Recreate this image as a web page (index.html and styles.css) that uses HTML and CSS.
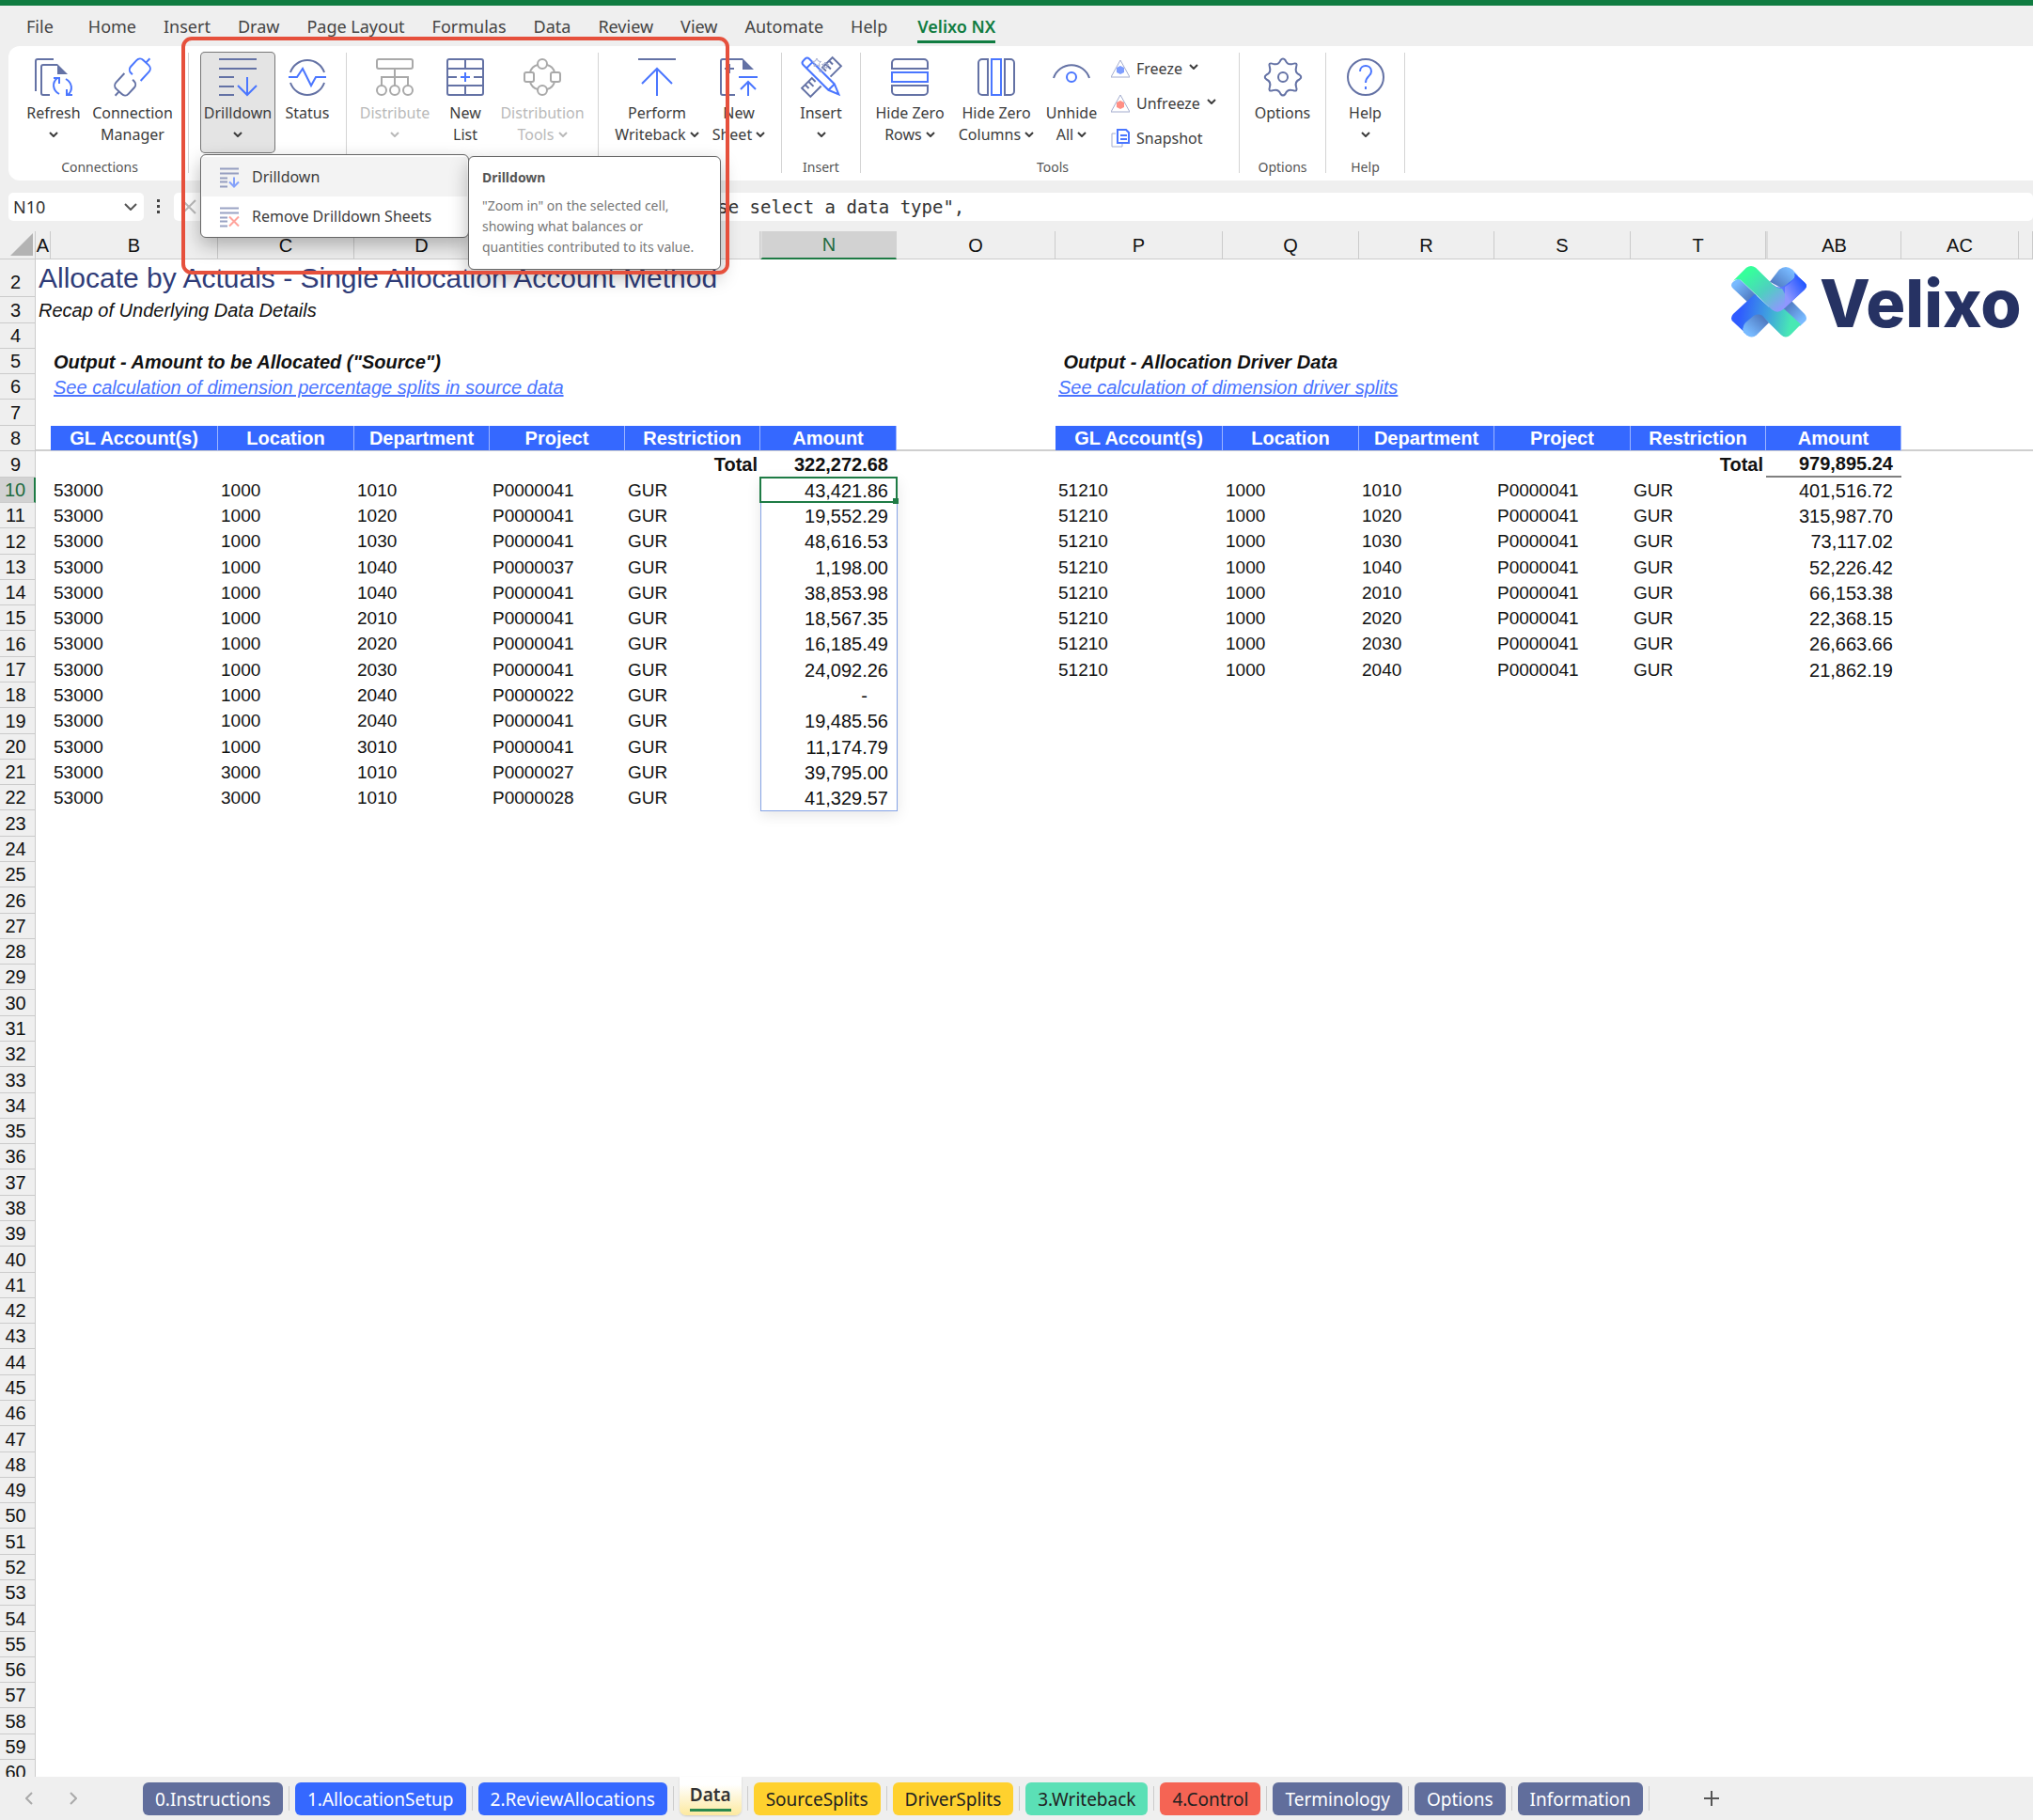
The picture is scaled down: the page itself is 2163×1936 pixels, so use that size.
FILE: index.html
```html
<!DOCTYPE html>
<html lang="en">
<head>
<meta charset="utf-8">
<title>Allocate by Actuals - Data</title>
<link rel="stylesheet" href="styles.css">
</head>
<body>
<svg class="defs" aria-hidden="true">
  <symbol id="chev" viewBox="0 0 10 6"><path d="M1 1l4 4 4-4" fill="none" stroke="currentColor" stroke-width="2"/></symbol>
</svg>

<nav class="tabs">
  <a href="#" class="file">File</a><a href="#">Home</a><a href="#">Insert</a><a href="#">Draw</a><a href="#">Page Layout</a><a href="#">Formulas</a><a href="#">Data</a><a href="#">Review</a><a href="#">View</a><a href="#">Automate</a><a href="#">Help</a><a href="#" class="current">Velixo NX</a>
</nav>

<section class="ribbon">
  <div class="group g-conn">
    <div class="row">
      <button class="cmd w70"><svg class="ico" viewBox="0 0 40 40"><path class="n" d="M1 35V3a2 2 0 0 1 2-2h17M16 39H9a2 2 0 0 1-2-2V9a2 2 0 0 1 2-2h15"/><path class="nf" d="M24 6l11 11H24z"/><path class="b" d="M26 38c-7-4-8-12-2-17M20 21h6v6M33 22c7 4 8 12 2 17M40 39h-6v-6"/></svg><span>Refresh</span><span><svg class="ch"><use href="#chev"/></svg></span></button>
      <button class="cmd w98"><svg class="ico" viewBox="0 0 40 40"><g transform="rotate(-47 20 20)"><path class="n" d="M-7 20H-1M17 11H4a5 5 0 0 0-5 5v8a5 5 0 0 0 5 5h9a5 5 0 0 0 5-5v-2"/><path class="b" d="M23 29h13a5 5 0 0 0 5-5v-8a5 5 0 0 0-5-5h-9a5 5 0 0 0-5 5v2M41 20h6"/></g></svg><span>Connection</span><span>Manager</span></button>
    </div>
    <div class="caption">Connections</div>
  </div>
  <i class="sep"></i>
  <div class="group g-drill">
    <div class="row">
      <div class="drop">
        <button class="cmd w80 open"><svg class="ico" viewBox="0 0 40 40"><path class="n" d="M0 1h40M0 11h40M0 20h16M0 30h16M0 39h16"/><path class="b" d="M30 20v19M20 29l10 10 10-10"/></svg><span>Drilldown</span><span><svg class="ch"><use href="#chev"/></svg></span></button>
        <div class="menu">
          <button class="item hover"><svg viewBox="0 0 20 20"><path class="n" d="M0 1h20M0 6h20M0 11h8M0 15h8M0 20h8"/><path class="b" d="M15 10v10M10 15l5 5 5-5"/></svg>Drilldown</button>
          <button class="item"><svg viewBox="0 0 20 20"><path class="n" d="M0 1h20M0 6h20M0 11h8M0 15h8M0 20h8"/><path class="r" d="M10 10l10 10M20 10L10 20"/></svg>Remove Drilldown Sheets</button>
        </div>
        <div class="tip" role="tooltip"><b>Drilldown</b><p>"Zoom in" on the selected cell,<br>showing what balances or<br>quantities contributed to its value.</p></div>
        <div class="frame"></div>
      </div>
      <button class="cmd w68"><svg class="ico" viewBox="0 0 40 40"><path class="n" d="M2 15a19 19 0 0 1 36 0M2 26a19 19 0 0 0 36 0"/><path class="b" d="M0 20h9l6-9 9 18 5-9h11"/></svg><span>Status</span></button>
    </div>
  </div>
  <i class="sep"></i>
  <div class="group g-dist">
    <div class="row">
      <button class="cmd w86" disabled><svg class="ico" viewBox="0 0 40 40"><path class="g" d="M3 1h34a2 2 0 0 1 2 2v6a2 2 0 0 1-2 2H3a2 2 0 0 1-2-2V3a2 2 0 0 1 2-2zM20 11v18M6 29v-9h28v9"/><circle class="g" cx="6" cy="34" r="5"/><circle class="g" cx="20" cy="34" r="5"/><circle class="g" cx="34" cy="34" r="5"/></svg><span>Distribute</span><span><svg class="ch"><use href="#chev"/></svg></span></button>
      <button class="cmd w64"><svg class="ico" viewBox="0 0 40 40"><path class="n" d="M3 1h34a2 2 0 0 1 2 2v34a2 2 0 0 1-2 2H3a2 2 0 0 1-2-2V3a2 2 0 0 1 2-2zM1 11h38M1 29h38M20 1v10M20 29v10M1 20h10M29 20h10"/><path class="b" d="M20 15v10M15 20h10"/></svg><span>New</span><span>List</span></button>
      <button class="cmd w100" disabled><svg class="ico" viewBox="0 0 40 40"><circle class="g" cx="20" cy="6" r="5"/><circle class="g" cx="20" cy="34" r="5"/><rect class="g" x="1" y="15" width="10" height="10" rx="2"/><rect class="g" x="29" y="15" width="10" height="10" rx="2"/><path class="g" d="M15 7c-4 1-7 4-8 8M25 7c4 1 7 4 8 8M15 33c-4-1-7-4-8-8M25 33c4-1 7-4 8-8"/></svg><span>Distribution</span><span>Tools <svg class="ch"><use href="#chev"/></svg></span></button>
    </div>
  </div>
  <i class="sep"></i>
  <div class="group g-write">
    <div class="row">
      <button class="cmd w104"><svg class="ico" viewBox="0 0 40 40"><path class="n" d="M0 1h40"/><path class="b" d="M20 40V11M4 27l16-16 16 16"/></svg><span>Perform</span><span>Writeback <svg class="ch"><use href="#chev"/></svg></span></button>
      <button class="cmd w70"><svg class="ico" viewBox="0 0 40 40"><path class="n" d="M16 39H3a2 2 0 0 1-2-2V3a2 2 0 0 1 2-2h21M10 6v10M5 11h10"/><path class="nf" d="M24 0l12 12H24z"/><path class="b" d="M20 20h20M30 40V26M22 33l8-8 8 8"/></svg><span>New</span><span>Sheet <svg class="ch"><use href="#chev"/></svg></span></button>
    </div>
  </div>
  <i class="sep"></i>
  <div class="group">
    <div class="row">
      <button class="cmd w84"><svg class="ico" viewBox="0 0 40 40"><g transform="rotate(-45 20 20)"><path class="n" d="M13 13.500H-3v13H13M27 13.500h16v13H27M2 14v5M7 14v7M12 14v5M28 14v5M33 14v7M38 14v5"/></g><g transform="rotate(45 20 20)"><path class="b" fill="#fff" d="M-3 15.500h38l11 4.500-11 4.500H-3a3 3 0 0 1-3-3v-3a3 3 0 0 1 3-3zM2 15.500v9M35 15.500v9"/></g><path class="thin" d="M15 0l1.500 3 3 .5-2 2 .5 3-3-1.500-3 1.500.5-3-2-2 3-.5zM24 4l1 2 2.500.5-2 1.500.5 2.500-2-1-2 1 .5-2.500-2-1.500 2.500-.5z"/><circle class="thin" cx="19" cy="13" r="1.500"/></svg><span>Insert</span><span><svg class="ch"><use href="#chev"/></svg></span></button>
    </div>
    <div class="caption">Insert</div>
  </div>
  <i class="sep"></i>
  <div class="group g-tools">
    <div class="row">
      <button class="cmd w92"><svg class="ico" viewBox="0 0 40 40"><path class="n" d="M1 11V5a4 4 0 0 1 4-4h30a4 4 0 0 1 4 4v6zM1 29v6a4 4 0 0 0 4 4h30a4 4 0 0 0 4-4v-6z"/><path class="b" d="M1 15h38v10H1z"/></svg><span>Hide Zero</span><span>Rows <svg class="ch"><use href="#chev"/></svg></span></button>
      <button class="cmd w92"><svg class="ico" viewBox="0 0 40 40"><path class="n" d="M11 1H5a4 4 0 0 0-4 4v30a4 4 0 0 0 4 4h6zM29 1h6a4 4 0 0 1 4 4v30a4 4 0 0 1-4 4h-6z"/><path class="b" d="M15 1h10v38H15z"/></svg><span>Hide Zero</span><span>Columns <svg class="ch"><use href="#chev"/></svg></span></button>
      <button class="cmd w68"><svg class="ico" viewBox="0 0 40 40"><path class="n" d="M1 21a20 20 0 0 1 38 0"/><circle class="b" cx="20" cy="20" r="5"/></svg><span>Unhide</span><span>All <svg class="ch"><use href="#chev"/></svg></span></button>
      <div class="stack">
        <button class="mini"><svg viewBox="0 0 20 20"><path class="thin" d="M10 1l10 18H0z"/><path fill="#7d9dff" d="M10 7l4 2v5l-4 2-4-2V9z"/></svg>Freeze <svg class="ch"><use href="#chev"/></svg></button>
        <button class="mini"><svg viewBox="0 0 20 20"><path class="thin" d="M10 1l10 18H0z"/><path fill="#ff8f85" d="M10 7l4 2v5l-4 2-4-2V9z"/></svg>Unfreeze <svg class="ch"><use href="#chev"/></svg></button>
        <button class="mini"><svg viewBox="0 0 20 20"><path class="thin" d="M5 5H1v14h11v-3"/><path class="b" fill="#e6edff" d="M7 1h9l3 3v11H7zM10 7h7M10 11h7"/></svg>Snapshot</button>
      </div>
    </div>
    <div class="caption">Tools</div>
  </div>
  <i class="sep"></i>
  <div class="group">
    <div class="row">
      <button class="cmd w91"><svg class="ico" viewBox="0 0 40 40"><path class="n" d="M17.500 2Q20-1 22.500 2C24 6 27 7 30.600 5.900Q36 4 34.100 9.400C33 13 34 16 37.500 17.500Q41 20 37.500 22.500C34 24 33 27 34.100 30.600Q36 36 30.600 34.100C27 33 24 34 22.500 38Q20 41 17.500 38C16 34 13 33 9.400 34.100Q4 36 5.900 30.600C7 27 6 24 2.500 22.500Q-1 20 2.500 17.500C6 16 7 13 5.900 9.400Q4 4 9.400 5.900C13 7 16 6 17.500 2z"/><circle class="n" cx="20" cy="20" r="5"/></svg><span>Options</span></button>
    </div>
    <div class="caption">Options</div>
  </div>
  <i class="sep"></i>
  <div class="group">
    <div class="row">
      <button class="cmd w84"><svg class="ico" viewBox="0 0 40 40"><circle class="n" cx="20" cy="20" r="19"/><path class="b" d="M14 14c0-8 12-8 12 0 0 5-6 5-6 12M20 30v3"/></svg><span>Help</span><span><svg class="ch"><use href="#chev"/></svg></span></button>
    </div>
    <div class="caption">Help</div>
  </div>
  <i class="sep"></i>
</section>

<section class="formula">
  <div class="namebox"><input aria-label="Name box" value="N10"><svg viewBox="0 0 14 8"><path d="M1 1l6 6 6-6" fill="none" stroke="#555" stroke-width="2"/></svg></div>
  <svg class="dots" viewBox="0 0 4 16"><path fill="#444" d="M0 0h3v3H0zM0 6h3v3H0zM0 12h3v3H0z"/></svg>
  <div class="fx"><svg viewBox="0 0 16 16"><path d="M1 1l14 14M15 1L1 15" stroke="#bbb" stroke-width="2"/></svg><input aria-label="Formula" value='"Please select a data type",'></div>
</section>

<main class="sheet">
<table>
<colgroup><col class="c38"><col class="c16"><col class="c178"><col class="c145"><col class="c144"><col class="c144"><col class="c144"><col class="c145"><col class="c169"><col class="c178"><col class="c145"><col class="c144"><col class="c145"><col class="c144"><col class="c144"><col class="c125"><col></colgroup>
<thead><tr><th class="corner"><svg viewBox="0 0 24 24"><path d="M24 0v24H0z" fill="#b3b3b3"/></svg></th><th>A</th><th>B</th><th>C</th><th>D</th><th>E</th><th>F</th><th class="sel gap">N</th><th>O</th><th>P</th><th>Q</th><th>R</th><th>S</th><th>T</th><th class="gap">AB</th><th>AC</th><th></th></tr></thead>
<tbody class="frozen">
<tr class="title"><th>2</th><td colspan="13">Allocate by Actuals - Single Allocation Account Method</td><td class="anchor" colspan="3">
  <div class="logo"><svg viewBox="0 0 80 82" preserveAspectRatio="none">
    <defs>
      <linearGradient id="ga" x1="0" y1="0" x2="1" y2="1"><stop offset="0.200" stop-color="#36ff9b"/><stop offset="0.550" stop-color="#4fcfc0"/><stop offset="0.900" stop-color="#8f97ff"/></linearGradient>
      <linearGradient id="gb" x1="1" y1="0" x2="0" y2="1"><stop offset="0.200" stop-color="#2457ff"/><stop offset="0.800" stop-color="#8f97ff"/></linearGradient>
      <linearGradient id="gc" x1="0" y1="0.600" x2="1" y2="0.700"><stop offset="0.100" stop-color="#2f5bff"/><stop offset="0.500" stop-color="#3f9fe0"/><stop offset="0.850" stop-color="#48e8b4"/></linearGradient>
      <linearGradient id="gd" x1="0" y1="0" x2="1" y2="1"><stop offset="0.200" stop-color="#78baff"/><stop offset="1" stop-color="#4468b0"/></linearGradient>
      <linearGradient id="ge" x1="1" y1="0" x2="0" y2="1"><stop offset="0.200" stop-color="#78baff"/><stop offset="1" stop-color="#4468b0"/></linearGradient>
      <linearGradient id="gf" x1="1" y1="1" x2="0" y2="0"><stop offset="0.200" stop-color="#78baff"/><stop offset="1" stop-color="#4468b0"/></linearGradient>
      <linearGradient id="gh" x1="0" y1="1" x2="1" y2="0"><stop offset="0.200" stop-color="#78baff"/><stop offset="1" stop-color="#4468b0"/></linearGradient>
    </defs>
    <path fill="url(#gd)" d="M2 18l6-4 19 20-9 8L2 26q-4-4 0-8z"/>
    <path fill="url(#ge)" d="M51 4q7-6 14 0l6 7-13 17-17-10z"/>
    <path fill="url(#gf)" d="M54 49l10-9 14 15q4 5 0 9l-5 5z"/>
    <path fill="url(#gb)" d="M67 8l11 11q4 4 0 8L55 50q-6 5-12 0l-4-20 5-9q8 7 16-1l6-5q3-3 1-7z"/>
    <path fill="url(#gc)" d="M25 32L2 55q-4 5 0 9l11 11q-1-6 3-9l8-8q5-4 12 3l17 18q5 5 10 0l11-12-28-28-6 8z"/>
    <path fill="url(#gh)" d="M15 65l9-8q5-3 9 0l7 8-13 14q-5 5-11 0l-3-3q-2-6 2-11z"/>
    <path fill="url(#ga)" d="M16 2q5-4 10 0l18 19q5 5 10 5l8 16-7 8q-6 5-12 0L10 16q-3-2-8 1z"/>
    <path fill="url(#gb)" d="M67 8l11 11q4 4 0 8L57 48V24q3-2 5-4l4-5q3-3 1-7z"/>
  </svg><strong>Velixo</strong></div></td></tr>
<tr class="tall"><th>3</th><td colspan="16" class="it">Recap of Underlying Data Details</td></tr>
<tr><th>4</th><td colspan="16"></td></tr>
<tr><th>5</th><td></td><td colspan="7" class="it bd">Output - Amount to be Allocated ("Source")</td><td colspan="8" class="it bd">&nbsp;Output - Allocation Driver Data</td></tr>
<tr><th>6</th><td></td><td colspan="7" class="it"><a href="#">See calculation of dimension percentage splits in source data</a></td><td colspan="8" class="it"><a href="#">See calculation of dimension driver splits</a></td></tr>
<tr class="tall"><th>7</th><td colspan="16"></td></tr>
<tr class="heads"><th>8</th><td></td><th scope="col">GL Account(s)</th><th scope="col">Location</th><th scope="col">Department</th><th scope="col">Project</th><th scope="col">Restriction</th><th scope="col">Amount</th><td></td><th scope="col">GL Account(s)</th><th scope="col">Location</th><th scope="col">Department</th><th scope="col">Project</th><th scope="col">Restriction</th><th scope="col">Amount</th><td colspan="2"></td></tr>
</tbody>
<tbody class="data">
<tr class="total"><th>9</th><td colspan="5"></td><td class="tl">Total</td><td class="num">322,272.68</td><td colspan="5"></td><td class="tl">Total</td><td class="num line">979,895.24</td><td colspan="2"></td></tr>
<tr><th class="sel">10</th><td></td><td>53000</td><td>1000</td><td>1010</td><td>P0000041</td><td>GUR</td><td class="num anchor">43,421.86<i class="spill"></i><i class="cursor"></i></td><td></td><td>51210</td><td>1000</td><td>1010</td><td>P0000041</td><td>GUR</td><td class="num">401,516.72</td><td colspan="2"></td></tr>
<tr><th>11</th><td></td><td>53000</td><td>1000</td><td>1020</td><td>P0000041</td><td>GUR</td><td class="num">19,552.29</td><td></td><td>51210</td><td>1000</td><td>1020</td><td>P0000041</td><td>GUR</td><td class="num">315,987.70</td><td colspan="2"></td></tr>
<tr><th>12</th><td></td><td>53000</td><td>1000</td><td>1030</td><td>P0000041</td><td>GUR</td><td class="num">48,616.53</td><td></td><td>51210</td><td>1000</td><td>1030</td><td>P0000041</td><td>GUR</td><td class="num">73,117.02</td><td colspan="2"></td></tr>
<tr><th>13</th><td></td><td>53000</td><td>1000</td><td>1040</td><td>P0000037</td><td>GUR</td><td class="num">1,198.00</td><td></td><td>51210</td><td>1000</td><td>1040</td><td>P0000041</td><td>GUR</td><td class="num">52,226.42</td><td colspan="2"></td></tr>
<tr><th>14</th><td></td><td>53000</td><td>1000</td><td>1040</td><td>P0000041</td><td>GUR</td><td class="num">38,853.98</td><td></td><td>51210</td><td>1000</td><td>2010</td><td>P0000041</td><td>GUR</td><td class="num">66,153.38</td><td colspan="2"></td></tr>
<tr><th>15</th><td></td><td>53000</td><td>1000</td><td>2010</td><td>P0000041</td><td>GUR</td><td class="num">18,567.35</td><td></td><td>51210</td><td>1000</td><td>2020</td><td>P0000041</td><td>GUR</td><td class="num">22,368.15</td><td colspan="2"></td></tr>
<tr><th>16</th><td></td><td>53000</td><td>1000</td><td>2020</td><td>P0000041</td><td>GUR</td><td class="num">16,185.49</td><td></td><td>51210</td><td>1000</td><td>2030</td><td>P0000041</td><td>GUR</td><td class="num">26,663.66</td><td colspan="2"></td></tr>
<tr><th>17</th><td></td><td>53000</td><td>1000</td><td>2030</td><td>P0000041</td><td>GUR</td><td class="num">24,092.26</td><td></td><td>51210</td><td>1000</td><td>2040</td><td>P0000041</td><td>GUR</td><td class="num">21,862.19</td><td colspan="2"></td></tr>
<tr><th>18</th><td></td><td>53000</td><td>1000</td><td>2040</td><td>P0000022</td><td>GUR</td><td class="num dash">-</td><td colspan="9"></td></tr>
<tr><th>19</th><td></td><td>53000</td><td>1000</td><td>2040</td><td>P0000041</td><td>GUR</td><td class="num">19,485.56</td><td colspan="9"></td></tr>
<tr><th>20</th><td></td><td>53000</td><td>1000</td><td>3010</td><td>P0000041</td><td>GUR</td><td class="num">11,174.79</td><td colspan="9"></td></tr>
<tr><th>21</th><td></td><td>53000</td><td>3000</td><td>1010</td><td>P0000027</td><td>GUR</td><td class="num">39,795.00</td><td colspan="9"></td></tr>
<tr><th>22</th><td></td><td>53000</td><td>3000</td><td>1010</td><td>P0000028</td><td>GUR</td><td class="num">41,329.57</td><td colspan="9"></td></tr>
<tr><th>23</th></tr><tr><th>24</th></tr><tr><th>25</th></tr><tr><th>26</th></tr><tr><th>27</th></tr><tr><th>28</th></tr><tr><th>29</th></tr><tr><th>30</th></tr>
<tr><th>31</th></tr><tr><th>32</th></tr><tr><th>33</th></tr><tr><th>34</th></tr><tr><th>35</th></tr><tr><th>36</th></tr><tr><th>37</th></tr><tr><th>38</th></tr><tr><th>39</th></tr><tr><th>40</th></tr>
<tr><th>41</th></tr><tr><th>42</th></tr><tr><th>43</th></tr><tr><th>44</th></tr><tr><th>45</th></tr><tr><th>46</th></tr><tr><th>47</th></tr><tr><th>48</th></tr><tr><th>49</th></tr><tr><th>50</th></tr>
<tr><th>51</th></tr><tr><th>52</th></tr><tr><th>53</th></tr><tr><th>54</th></tr><tr><th>55</th></tr><tr><th>56</th></tr><tr><th>57</th></tr><tr><th>58</th></tr><tr><th>59</th></tr><tr><th>60</th></tr>
</tbody>
</table>
</main>

<footer class="bottom">
  <button class="nav" aria-label="Previous sheet"><svg viewBox="0 0 8 14"><path d="M7 1L1 7l6 6"/></svg></button>
  <button class="nav" aria-label="Next sheet"><svg viewBox="0 0 8 14"><path d="M1 1l6 6-6 6"/></svg></button>
  <ul>
    <li><button class="slate">0.Instructions</button></li>
    <li><button class="blue">1.AllocationSetup</button></li>
    <li><button class="blue">2.ReviewAllocations</button></li>
    <li><button class="active"><span>Data</span></button></li>
    <li><button class="yellow">SourceSplits</button></li>
    <li><button class="yellow">DriverSplits</button></li>
    <li><button class="mint">3.Writeback</button></li>
    <li><button class="coral">4.Control</button></li>
    <li><button class="slate">Terminology</button></li>
    <li><button class="slate">Options</button></li>
    <li><button class="slate">Information</button></li>
  </ul>
  <button class="add" aria-label="New sheet"><svg viewBox="0 0 16 16"><path d="M8 0v16M0 8h16" stroke="#555" stroke-width="2"/></svg></button>
</footer>
</body>
</html>
```
FILE: styles.css
```css
* { box-sizing: border-box; }
body {
  margin: 0;
  height: 100vh;
  display: flex;
  flex-direction: column;
  overflow: hidden;
  background: #efefef;
  color: #333;
  font-family: "Noto Sans", sans-serif;
}
button, input { font: inherit; color: inherit; border: 0; background: none; padding: 0; margin: 0; }
.defs { position: absolute; width: 0; height: 0; }

/* icon strokes */
.n, .b, .g, .r, .thin { fill: none; stroke-width: 2; }
.b[fill] { fill: #fff; }
.n { stroke: #6472a5; }
.b { stroke: #4a76ff; }
.g { stroke: #a9a9a9; }
.r { stroke: #ff7468; }
.thin { stroke: #a3acce; stroke-width: 1; }
.nf { fill: #6472a5; }

/* ribbon tabs */
.tabs {
  flex: none;
  display: flex;
  gap: 29px;
  height: 49px;
  padding: 6px 0 0 28px;
  border-top: 6px solid #107c41;
  font-size: 18px;
  line-height: 32px;
}
.tabs a { color: #444; text-decoration: none; height: 34px; }
.tabs .file { margin-right: 8px; }
.tabs .current { margin-left: 3px; color: #107c41; font-weight: 600; border-bottom: 3px solid #107c41; }

/* ribbon */
.ribbon {
  flex: none;
  display: flex;
  align-items: flex-start;
  height: 143px;
  margin-left: 9px;
  padding-top: 6px;
  background: #fff;
  border-radius: 12px 0 0 12px;
  font-size: 16px;
}
.row { display: flex; height: 108px; }
.g-conn { padding: 0 10px 0 13px; }
.g-drill { padding: 0 7px 0 12px; }
.g-dist { padding: 0 9px 0 8px; }
.g-write { padding: 0 10px; }
.g-tools { padding-left: 6px; }
.sep { width: 1px; height: 128px; margin-top: 1px; background: #d4d4d4; }
.caption { font-size: 14px; line-height: 20px; margin-top: 5px; text-align: center; color: #555; }
.cmd {
  display: flex;
  flex-direction: column;
  align-items: center;
  height: 108px;
  padding-top: 7px;
  line-height: 23px;
  white-space: nowrap;
  color: #3c3c3c;
}
.cmd:disabled { color: #b9b9b9; }
.cmd .ico { width: 40px; height: 40px; margin-bottom: 7px; overflow: visible; flex: none; }
.cmd span { height: 23px; }
.ch { width: 10px; height: 6px; margin: 0 0 4px; vertical-align: middle; }
.w64 { width: 64px; }
.w68 { width: 68px; }
.w70 { width: 70px; }
.w80 { width: 80px; }
.w84 { width: 83px; }
.w86 { width: 86px; }
.w91 { width: 91px; }
.w92 { width: 92px; }
.w98 { width: 98px; }
.w100 { width: 100px; }
.w104 { width: 104px; }
.open { background: #e4e4e4; border-radius: 5px; box-shadow: inset 0 0 0 1px #777; }
.stack { display: flex; flex-direction: column; width: 144px; padding-left: 8px; }
.mini { flex: none; display: flex; align-items: center; gap: 7px; height: 37px; line-height: 36px; padding-bottom: 1px; color: #3c3c3c; }
.mini svg:first-child { width: 20px; height: 20px; }

.drop { position: relative; z-index: 5; }
.menu {
  position: absolute;
  left: 0;
  top: 109px;
  width: 286px;
  padding: 2px 1px 1px;
  background: #fff;
  border: 1px solid #666;
  border-radius: 6px;
  box-shadow: 0 8px 20px rgba(0, 0, 0, .28);
}
.item { display: flex; align-items: center; gap: 14px; width: 100%; height: 42px; padding-left: 19px; color: #3c3c3c; }
.item svg { width: 20px; height: 21px; overflow: visible; opacity: .65; }
.hover { background: #f3f3f3; }
.tip {
  position: absolute;
  left: 285px;
  top: 111px;
  width: 269px;
  height: 121px;
  padding: 11px 0 0 14px;
  background: #fff;
  border: 1px solid #666;
  border-radius: 6px;
  box-shadow: 0 8px 20px rgba(0, 0, 0, .28);
  font-size: 14px;
  line-height: 22px;
  white-space: nowrap;
  color: #777;
}
.tip b { color: #555; }
.tip p { margin: 8px 0 0; }
.frame {
  position: absolute;
  left: -20px;
  top: -16px;
  width: 583px;
  height: 253px;
  border: 4px solid #e6503c;
  border-radius: 11px;
  pointer-events: none;
}

/* formula bar */
.formula { flex: none; display: flex; align-items: center; height: 54px; padding: 12px 0 11px 9px; }
.namebox, .fx { display: flex; align-items: center; height: 30px; background: #fff; border-radius: 5px; }
.namebox { width: 144px; padding: 0 7px 0 5px; }
.namebox input { flex: 1; min-width: 0; font-size: 18px; }
.namebox svg { width: 14px; height: 8px; }
.dots { width: 4px; height: 16px; margin: 0 14px; }
.fx { flex: 1; padding-left: 8px; }
.fx svg { width: 16px; height: 16px; }
.fx input { flex: 1; padding-left: 497px; font: 19px "DejaVu Sans Mono", monospace; }

/* grid */
.sheet { flex: 1; min-height: 0; overflow: hidden; background: #fff; }
table {
  width: 100%;
  table-layout: fixed;
  border-collapse: separate;
  border-spacing: 0;
  font: 20px/26px "Liberation Sans", Arial, sans-serif;
  color: #111;
}
.c16 { width: 16px; }
.c38 { width: 38px; }
.c125 { width: 125px; }
.c144 { width: 144px; }
.c145 { width: 145px; }
.c169 { width: 169px; }
.c178 { width: 178px; }
th, td { padding: 0; white-space: nowrap; text-align: left; }
th { font-weight: 400; }
td { padding-left: 3px; }
thead th {
  height: 30px;
  text-align: center;
  background: #efefef;
  border-right: 1px solid #cbcbcb;
  border-bottom: 1px solid #cbcbcb;
}
thead th.gap { border-left: 2px solid #dcdcdc; }
thead th.sel { border-bottom: 2px solid #1e7b45; border-right-color: #d2d2d2; }
th.sel { background: #d2d2d2; color: #1e6b40; }
thead .corner { padding: 0 3px 1px 11px; }
.corner svg { display: block; width: 24px; height: 24px; }
tbody tr { height: 27px; }
tbody th:first-child {
  background: #efefef;
  border-right: 1px solid #cbcbcb;
  border-bottom: 1px solid #cbcbcb;
  text-align: center;
  padding-right: 4px;
}
tbody th.sel:first-child { background: #d2d2d2; border-right: 2px solid #1e7b45; }
.title { height: 40px; }
.title th:first-child { vertical-align: bottom; padding-bottom: 2px; }
.title td { font-size: 30px; line-height: 40px; color: #2f3c78; }
.tall, .data tr:nth-child(7n+1), .data tr:nth-child(7n+4) { height: 28px; }
.it { font-style: italic; }
.bd { font-weight: 700; }
td a { color: #4a74ff; }
.heads td, .heads th { border-bottom: 2px solid #cfcfcf; line-height: 25px; }
.heads th[scope] {
  background: #3568ff;
  color: #fff;
  font-weight: 700;
  text-align: center;
  border-bottom: 1px solid #cfcfcf;
  border-right: 1px solid #9db5ff;
}
.data td { font-size: 19px; }
.data .num { text-align: right; padding-right: 9px; font-size: 20px; }
.data .dash { padding-right: 31px; }
.data .tl { text-align: right; padding-right: 3px; }
.data .total td { font-weight: 700; font-size: 20px; }
.line { border-bottom: 2px solid #808080; }
.anchor { position: relative; }
.spill {
  position: absolute;
  left: 0;
  top: 0;
  width: 146px;
  height: 355px;
  border: 1px solid #86a4e6;
  box-shadow: 0 4px 14px rgba(0, 0, 0, .1);
}
.cursor { position: absolute; inset: -1px -1px 0; border: 2px solid #1e7b45; }
.cursor::after {
  content: "";
  position: absolute;
  right: -3px;
  bottom: -3px;
  width: 6px;
  height: 6px;
  background: #1e7b45;
}
.logo { position: absolute; left: -37px; top: 7px; display: flex; align-items: flex-start; gap: 14px; }
.logo svg { width: 80px; height: 76px; }
.logo strong { font: 800 70px/79px Inter, sans-serif; color: #263263; }

/* sheet tabs */
.bottom { flex: none; display: flex; align-items: center; height: 46px; padding-left: 24px; font-size: 19px; }
.nav { width: 14px; height: 20px; margin-right: 33px; line-height: 0; }
.nav svg { width: 8px; height: 14px; fill: none; stroke: #aaa; stroke-width: 2; }
.bottom ul { display: flex; height: 46px; margin: 0; padding: 0 0 0 34px; list-style: none; }
.bottom li {
  padding: 6px 13px 0 0;
  background: linear-gradient(#ccc, #ccc) no-repeat right 6px center / 1px 26px;
}
.bottom li button { height: 35px; padding: 0 13px; border-radius: 6px; line-height: 36px; }
.slate { background: #616e9c; color: #fff; }
.blue { background: #3568ff; color: #fff; }
.yellow { background: #ffd12e; color: #222; }
.mint { background: #5be0b6; color: #222; }
.coral { background: #f56454; color: #222; }
.bottom li button.active {
  height: 41px;
  margin-top: -6px;
  padding: 0 11px;
  border-radius: 0 0 7px 7px;
  background: linear-gradient(#fff 20%, #fde99f);
  box-shadow: 0 1px 2px rgba(0, 0, 0, .15);
  font-weight: 600;
}
.active span { display: block; line-height: 30px; border-bottom: 3px solid #2a8a4e; }
.add { margin-left: 52px; width: 16px; height: 16px; line-height: 0; }
```
